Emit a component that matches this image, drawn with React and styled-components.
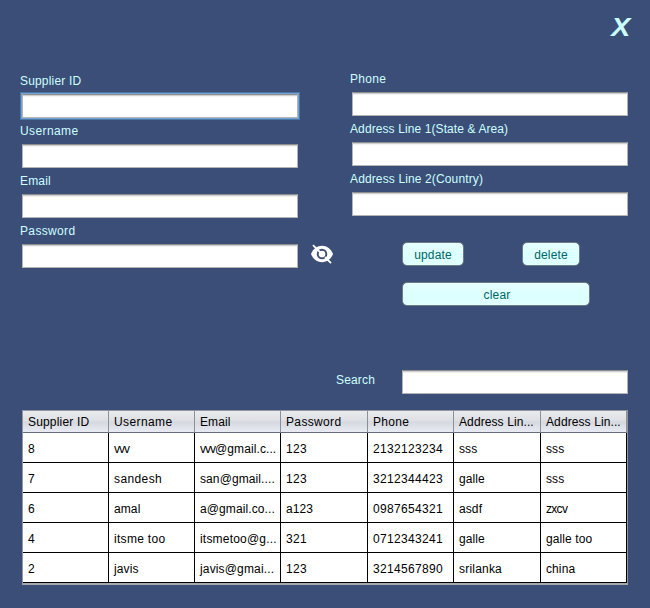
import React from "react";
import styled, { createGlobalStyle } from "styled-components";

const GlobalStyle = createGlobalStyle`
  *, *::before, *::after { box-sizing: border-box; }
  body { margin: 0; background: #3b4e78; }
`;

const Window = styled.main`
  width: 650px;
  height: 608px;
  padding: 12px 22px 0;
  background: #3b4e78;
  color: #ccffff;
  font-family: "Liberation Sans", Arial, sans-serif;
  font-size: 12px;
  line-height: 14px;
  letter-spacing: 0.17px;
  overflow: hidden;
`;

const TitleBar = styled.header`
  display: flex;
  justify-content: flex-end;
  height: 60px;
  margin-right: -2px;
`;

const CloseButton = styled.button`
  align-self: flex-start;
  padding: 0;
  border: 0;
  background: none;
  color: #ccffff;
  font: italic bold 26px/30px "Liberation Sans", Arial, sans-serif;
  transform: scaleX(1.1);
  transform-origin: right;
`;

const Form = styled.div`
  display: grid;
  grid-template-columns: 276px 276px;
  column-gap: 54px;
  height: 298px;
`;

const Column = styled.div`
  padding-top: ${(p) => p.$top}px;
`;

const Field = styled.div`
  height: 50px;
`;

const Label = styled.label`
  display: block;
  height: 20px;
  margin-left: -2px;
  white-space: nowrap;
  letter-spacing: ${(p) => p.$track ?? 0.17}px;
`;

const Input = styled.input`
  display: block;
  flex: none;
  width: ${(p) => p.$width || 276}px;
  height: 24px;
  padding: 2px 6px;
  border: 1px solid #b4b4b4;
  border-top-color: #8d8e8f;
  border-radius: 0;
  outline: none;
  background: linear-gradient(#cfcfcf 0 1px, #f2f2f2 1px 2px, #fff 2px);
  box-shadow: ${(p) => (p.$active ? "0 0 0 1px #73a4d1, 0 0 0 2px #4b76a8" : "none")};
`;

const InputRow = styled.div`
  display: flex;
  align-items: center;
  gap: 13px;
`;

const EyeIcon = styled.svg`
  flex: none;
  width: 22px;
  height: 20px;
  margin-top: -4px;
`;

const Actions = styled.div`
  display: grid;
  grid-template-columns: 62px 58px 10px;
  grid-template-rows: 24px 24px;
  column-gap: 58px;
  row-gap: 16px;
  width: 188px;
  margin: 20px 0 0 50px;
`;

const Button = styled.button`
  grid-column: ${(p) => (p.$wide ? "1 / -1" : "auto")};
  width: ${(p) => (p.$wide ? "188px" : "auto")};
  padding: ${(p) => (p.$wide ? "1px 0 0 2px" : "1px 0 0")};
  border: 1px solid #707880;
  border-radius: 5px;
  background: linear-gradient(#e6ffff, #dcffff 50%, #e0ffff);
  color: #006666;
  font: 12px/14px "Liberation Sans", Arial, sans-serif;
  letter-spacing: 0.15px;
`;

const SearchBar = styled.div`
  display: flex;
  justify-content: flex-end;
  height: 40px;
`;

const SearchLabel = styled.label`
  width: 66px;
  padding-top: 3px;
`;

const Table = styled.div`
  display: grid;
  grid-template-columns: 86px 86px 86px 87px 86px 87px 86px;
  width: 606px;
  height: 175px;
  border: 1px solid #93979d;
  border-bottom: 2px solid #a5a9ad;
  background: #fff;
  color: #000;
`;

const Cell = styled.div`
  height: 30px;
  padding: 9px 0 0 5px;
  border-right: 1px solid #000;
  border-bottom: 1px solid #000;
  white-space: nowrap;
  overflow: hidden;
  letter-spacing: ${(p) => p.$track ?? 0.1}px;
`;

const TightRun = styled.span`
  letter-spacing: -1px;
`;

const HeaderCell = styled(Cell)`
  height: 22px;
  padding-top: 4px;
  border-color: #8b919b;
  border-bottom-color: #646c79;
  background: linear-gradient(#eaebee 0, #dddfe4 48%, #d6d8df 52%, #e8ebf3 100%);
`;

const leftFields = ["Supplier ID", "Username", "Email", "Password"];
const rightFields = ["Phone", "Address Line 1(State & Area)", "Address Line 2(Country)"];
const columns = ["Supplier ID", "Username", "Email", "Password", "Phone", "Address Lin...", "Address Lin..."];
const rows = [
  ["8", "vvv", "vvv@gmail.c...", "123", "2132123234", "sss", "sss"],
  ["7", "sandesh", "san@gmail....", "123", "3212344423", "galle", "sss"],
  ["6", "amal", "a@gmail.co...", "a123", "0987654321", "asdf", "zxcv"],
  ["4", "itsme too", "itsmetoo@g...", "321", "0712343241", "galle", "galle too"],
  ["2", "javis", "javis@gmai...", "123", "3214567890", "srilanka", "china"],
];

const tracking = {
  "Username": 0.4,
  "Password": 0.35,
  "Phone": 0.3,
  "Address Line 1(State & Area)": 0.1,
  "Address Line 2(Country)": 0.13,
  "Supplier ID": 0.17,
  "sandesh": 0.4,
  "itsme too": 0.3,
  "itsmetoo@g...": 0.2,
  "javis@gmai...": 0.15,
  "srilanka": 0.2,
  "zxcv": -0.7,
};

const trackFor = (text) => tracking[text] ?? (/^\d+$/.test(text) ? 0.33 : undefined);

function CellText({ value }) {
  return value.startsWith("vvv") ? <><TightRun>vvv</TightRun>{value.slice(3)}</> : value;
}

function HiddenEye() {
  return (
    <EyeIcon viewBox="0 0 22 20" aria-label="Show password">
      <path d="M0 10C2 5 6 1.8 11 1.8s9 3.2 11 8.2c-2 5-6 8.2-11 8.2S2 15 0 10Z" fill="#fff" />
      <circle cx="11" cy="10" r="4.3" fill="none" stroke="#3b4e78" strokeWidth="1.9" />
      <path d="M4.1 .3 6.4 2.6M15.7 17.5 18 19.8" stroke="#3b4e78" strokeWidth="1.2" />
      <path d="M2 1.2 11 10.2M14 13.2 20 19.2" stroke="#fff" strokeWidth="1.8" />
    </EyeIcon>
  );
}

export default function App() {
  return (
    <>
      <GlobalStyle />
      <Window>
        <TitleBar><CloseButton>X</CloseButton></TitleBar>
        <Form>
          <Column $top={2}>
            {leftFields.map((name, i) => (
              <Field key={name}>
                <Label $track={trackFor(name)}>{name}</Label>
                <InputRow>
                  <Input aria-label={name} $active={i === 0} />
                  {name === "Password" && <HiddenEye />}
                </InputRow>
              </Field>
            ))}
          </Column>
          <Column $top={0}>
            {rightFields.map((name) => (
              <Field key={name}>
                <Label $track={trackFor(name)}>{name}</Label>
                <Input aria-label={name} />
              </Field>
            ))}
            <Actions>
              <Button>update</Button>
              <Button>delete</Button>
              <Button $wide>clear</Button>
            </Actions>
          </Column>
        </Form>
        <SearchBar>
          <SearchLabel>Search</SearchLabel>
          <Input aria-label="Search" $width={226} />
        </SearchBar>
        <Table>
          {columns.map((name, i) => <HeaderCell key={i} $track={trackFor(name)}>{name}</HeaderCell>)}
          {rows.map((row) => row.map((value, i) => (
            <Cell key={row[0] + i} $track={trackFor(value)}><CellText value={value} /></Cell>
          )))}
        </Table>
      </Window>
    </>
  );
}
